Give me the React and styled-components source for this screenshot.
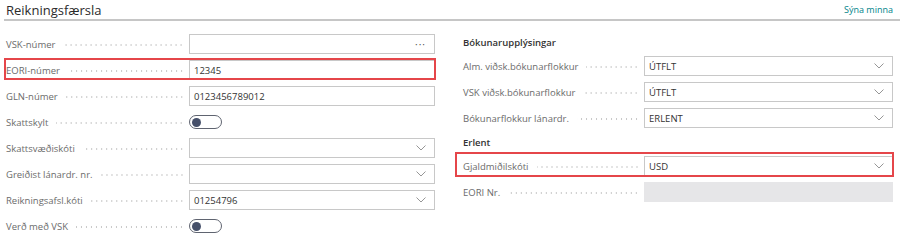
import React from "react";
import styled, { createGlobalStyle } from "styled-components";

const Global = createGlobalStyle`
  html, body { margin: 0; padding: 0; background: #ffffff; }
  body { font-family: "Open Sans", "Noto Sans", sans-serif; color: #333; }
`;

const Page = styled.div`
  width: 900px;
  height: 241px;
  box-sizing: border-box;
  overflow: hidden;
`;

const TitleBar = styled.div`
  margin-left: 4px;
  height: 19px;
  padding: 0 7px 0 2px;
  display: flex;
  justify-content: space-between;
  align-items: center;
  border-bottom: 2px solid #c6c6c6;
`;

const Title = styled.div`
  font-size: 13px;
  color: #2b2b2b;
  line-height: 18px;
`;

const Link = styled.a`
  font-size: 9px;
  color: #00838a;
  text-decoration: none;
`;

const Columns = styled.div`
  display: flex;
  gap: 28px;
  padding-left: 6px;
  margin-top: 10px;
`;

const Column = styled.div`
  width: ${(p) => p.$width}px;
  display: flex;
  flex-direction: column;
`;

const GroupHeader = styled.div`
  height: 22px;
  box-sizing: border-box;
  padding-top: 4px;
  line-height: 16px;
  font-size: 9.5px;
  font-weight: 600;
  color: #333;
`;

const Row = styled.div`
  position: relative;
  height: 26px;
  display: grid;
  grid-template-columns: ${(p) => p.$labelWidth}px 1fr;
  align-items: center;
  &::after {
    content: "";
    display: ${(p) => (p.$hl ? "block" : "none")};
    position: absolute;
    inset: ${(p) => p.$hl || "0"};
    border: 2px solid #e5464a;
    pointer-events: none;
  }
`;

const LabelCell = styled.div`
  display: flex;
  align-items: center;
  padding-right: 5px;
  min-width: 0;
`;

const LabelText = styled.span`
  font-size: 9.5px;
  color: #6b6b6b;
  white-space: nowrap;
  padding-right: 8px;
`;

const Leader = styled.span`
  flex: 1;
  height: 2px;
  margin-top: 2px;
  background-image: radial-gradient(circle, #c8c8c8 0.6px, transparent 0.9px);
  background-size: 5px 2px;
  background-position: right center;
  background-repeat: repeat-x;
`;

const Field = styled.div`
  height: 20px;
  box-sizing: border-box;
  border: ${(p) => (p.$disabled ? "none" : "1px solid #c8c8c8")};
  background: ${(p) => (p.$disabled ? "#e6e6e8" : "#fff")};
  display: flex;
  align-items: center;
  padding: 0 8px 0 4px;
  font-size: 9.5px;
  color: #333;
`;

const Value = styled.span`
  flex: 1;
  white-space: nowrap;
`;

const Dots = styled.span`
  color: #555;
  font-size: 10px;
  letter-spacing: 1px;
  line-height: 1;
`;

const Toggle = styled.div`
  width: 29px;
  height: 12px;
  border: 1px solid #5f6470;
  border-radius: 8px;
  display: flex;
  align-items: center;
  padding-left: 2px;
  box-sizing: content-box;
  &::before {
    content: "";
    width: 9px;
    height: 9px;
    border-radius: 50%;
    background: #46506a;
  }
`;

const Chevron = () => (
  <svg width="10" height="6" viewBox="0 0 10 6">
    <path d="M0.5 0.5 L5 5 L9.5 0.5" fill="none" stroke="#8a8a8a" strokeWidth="0.9" />
  </svg>
);

const FormRow = ({ label, labelWidth, kind, value, hl }) => (
  <Row $labelWidth={labelWidth} $hl={hl}>
    <LabelCell>
      <LabelText>{label}</LabelText>
      <Leader />
    </LabelCell>
    {kind === "toggle" ? (
      <div>
        <Toggle />
      </div>
    ) : (
      <Field $disabled={kind === "disabled"}>
        <Value>{value}</Value>
        {kind === "select" && <Chevron />}
        {kind === "lookup" && <Dots>···</Dots>}
      </Field>
    )}
  </Row>
);

const leftRows = [
  { label: "VSK-númer", kind: "lookup", value: "" },
  { label: "EORI-númer", kind: "text", value: "12345", hl: "1px -1px 3px -2px" },
  { label: "GLN-númer", kind: "text", value: "0123456789012" },
  { label: "Skattskylt", kind: "toggle" },
  { label: "Skattsvæðiskóti", kind: "select", value: "" },
  { label: "Greiðist lánardr. nr.", kind: "select", value: "" },
  { label: "Reikningsafsl.kóti", kind: "select", value: "01254796" },
  { label: "Verð með VSK", kind: "toggle" },
];

export default function App() {
  return (
    <Page>
      <Global />
      <TitleBar>
        <Title>Reikningsfærsla</Title>
        <Link href="#">Sýna minna</Link>
      </TitleBar>
      <Columns>
        <Column $width={429}>
          {leftRows.map((r) => (
            <FormRow key={r.label} labelWidth={183} {...r} />
          ))}
        </Column>
        <Column $width={430}>
          <GroupHeader>Bókunarupplýsingar</GroupHeader>
          <FormRow labelWidth={181} label="Alm. viðsk.bókunarflokkur" kind="select" value="ÚTFLT" />
          <FormRow labelWidth={181} label="VSK viðsk.bókunarflokkur" kind="select" value="ÚTFLT" />
          <FormRow labelWidth={181} label="Bókunarflokkur lánardr." kind="select" value="ERLENT" />
          <GroupHeader>Erlent</GroupHeader>
          <FormRow labelWidth={181} label="Gjaldmiðilskóti" kind="select" value="USD" hl="-1px -1px 2px -8px" />
          <FormRow labelWidth={181} label="EORI Nr." kind="disabled" value="" />
        </Column>
      </Columns>
    </Page>
  );
}
